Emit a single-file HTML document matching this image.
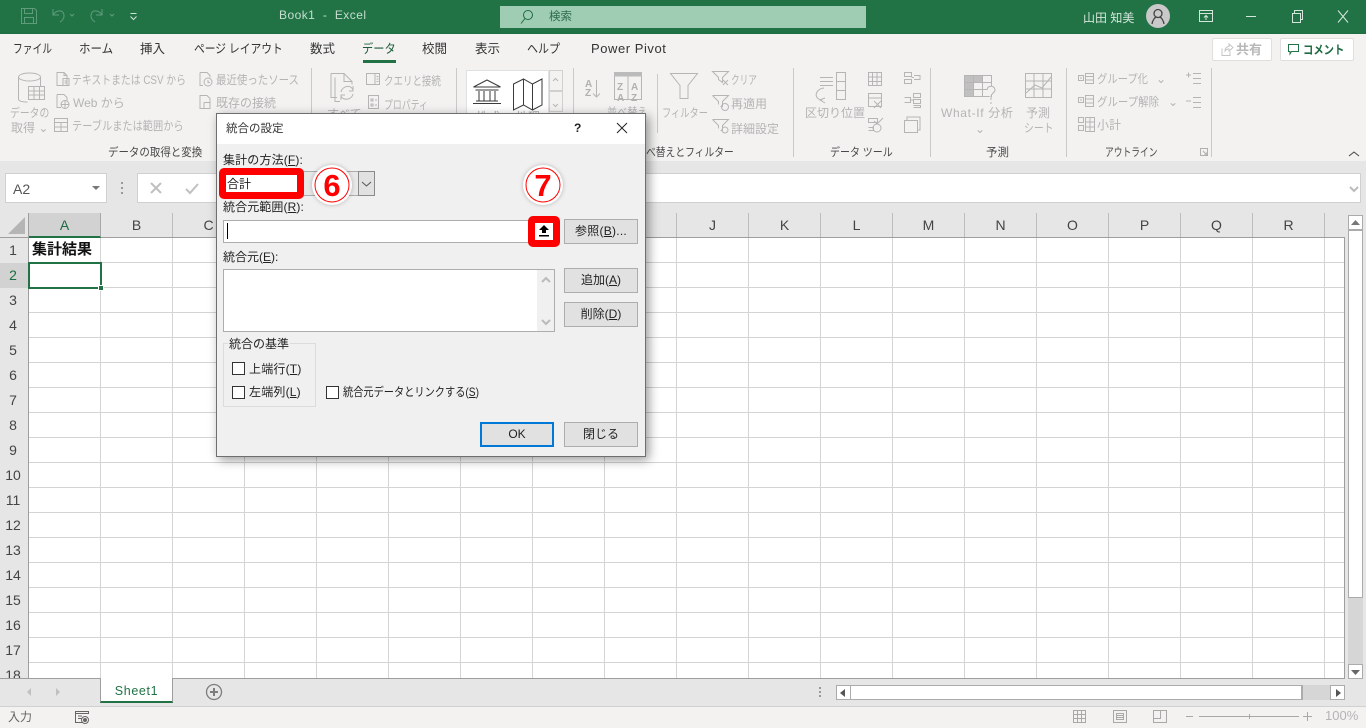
<!DOCTYPE html>
<html lang="ja"><head><meta charset="utf-8"><title>Book1 - Excel</title>
<style>
*{box-sizing:border-box}
html,body{margin:0;padding:0;width:1366px;height:728px;overflow:hidden;background:#e6e6e6}
body{position:relative;font-family:"Liberation Sans","Noto Sans CJK JP",sans-serif;font-size:12px;color:#444}
.a{position:absolute}
.t{position:absolute;white-space:nowrap;line-height:16px;transform-origin:0 0}
.g{color:#b4b4b4}
.l{color:#4a4a4a}
.d{color:#333;font-size:12.500px}
u{text-decoration:underline;text-underline-offset:1px}
svg{position:absolute;overflow:visible}
svg.i{fill:none;stroke:#b5b5b5;stroke-width:1}
.btn{position:absolute;left:564px;width:74px;height:25px;background:#e1e1e1;border:1px solid #adadad;text-align:center;line-height:23px;color:#222}
.cb{position:absolute;width:13px;height:13px;background:#fff;border:1px solid #333}
.sep{position:absolute;top:68px;width:1px;height:89px;background:#c9c9c9}
.col{position:absolute;top:213px;width:72px;height:24px;text-align:center;line-height:24px;font-size:14px;color:#444;border-right:1px solid #bdbdbd}
.row{position:absolute;left:0;width:28px;height:25px;text-align:center;line-height:25px;font-size:14px;color:#444;padding-right:2px}
</style></head><body>

<!-- title bar -->
<div class="a" style="left:0;top:0;width:1366px;height:34px;background:#217346"></div>
<svg class="i" style="left:0;top:0;stroke:#5f9c7c" width="180" height="34">
<path d="M21.500 8.500h13l2 2v13h-15zM24.500 8.500v5h8v-5M24.500 23.500v-6h9v6"/>
<path d="M53 9v6h6M53 15c3-5 10-6 11 0 .5 3-2 6-4 7"/>
<path d="M70 14l2 2 2-2M110 14l2 2 2-2" />
<path d="M102 9v6h-6M102 15c-3-5-10-6-11 0-.5 3 2 6 4 7"/>
<path d="M130.500 13.500h6M130.500 16.500l3 3 3-3" stroke="#cfe3d8"/>
</svg>
<div class="t" style="left:279px;top:7px;color:#c6ddd0;font-size:12px;letter-spacing:.45px">Book1&nbsp; -&nbsp; Excel</div>
<div class="a" style="left:500px;top:6px;width:366px;height:22px;background:#9fcdb3"></div>
<svg class="i" style="left:518px;top:8px;stroke:#1e6b42" width="20" height="18"><circle cx="10" cy="7" r="4.500"/><path d="M7 10.500l-4 5"/></svg>
<div class="t" style="left:549px;top:9px;color:#2d6b4a;font-size:11.500px">検索</div>
<div class="t" style="left:1083px;top:10px;color:#d5e6dc;font-size:12px">山田 知美</div>
<div class="a" style="left:1146px;top:4px;width:24px;height:24px;border-radius:50%;background:#c9c9c9"></div>
<svg class="i" style="left:1146px;top:4px;stroke:#444;stroke-width:1.300" width="24" height="24"><circle cx="12" cy="9.500" r="4"/><path d="M6 20c.5-4 3-6.500 4-7M18 20c-.5-4-3-6.500-4-7"/></svg>
<svg class="i" style="left:1190px;top:0;stroke:#d5e6dc" width="170" height="34">
<path d="M9.500 10.500h13v11h-13zM9.500 13.500h13M16 20v-4M14 17.500l2-2 2 2"/>
<path d="M56 16.500h10"/>
<path d="M102.500 13.500h8v9h-8zM104.500 13.500v-3h8v9h-2"/>
<path d="M148 10.500l10 12M158 10.500l-10 12"/>
</svg>

<!-- ribbon -->
<div class="a" style="left:0;top:34px;width:1366px;height:127px;background:#f3f2f1;box-shadow:0 1px 3px rgba(0,0,0,.22)"></div>
<div class="t d" style="left:13px;top:41px;transform:scaleX(.78)">ファイル</div>
<div class="t d" style="left:79px;top:41px;transform:scaleX(.92)">ホーム</div>
<div class="t d" style="left:140px;top:41px">挿入</div>
<div class="t d" style="left:194px;top:41px;transform:scaleX(.86)">ページ レイアウト</div>
<div class="t d" style="left:310px;top:41px">数式</div>
<div class="t d" style="left:362px;top:41px;color:#1d5c3a;transform:scaleX(.9)">データ</div>
<div class="a" style="left:363px;top:60px;width:33px;height:3px;background:#217346"></div>
<div class="t d" style="left:422px;top:41px">校閲</div>
<div class="t d" style="left:475px;top:41px">表示</div>
<div class="t d" style="left:527px;top:41px;transform:scaleX(.88)">ヘルプ</div>
<div class="t d" style="left:591px;top:41px;font-size:13px;letter-spacing:.55px">Power Pivot</div>

<div class="a" style="left:1212px;top:38px;width:60px;height:23px;background:#fff;border:1px solid #e1dfdd;border-radius:2px"></div>
<svg class="i" style="left:1220px;top:43px;stroke:#c4c4c4" width="14" height="14"><path d="M2 5.500v7h8v-4M5 8c0-3 2-4.500 4-4.500V1l4 3.500-4 3.500V6c-2 0-3 .5-4 2z"/></svg>
<div class="t g" style="left:1236px;top:42px;font-size:13px;font-weight:bold;color:#b8b8b8">共有</div>
<div class="a" style="left:1280px;top:38px;width:74px;height:23px;background:#fff;border:1px solid #e1dfdd;border-radius:2px"></div>
<svg class="i" style="left:1288px;top:44px;stroke:#217346" width="12" height="12"><path d="M.5.500h10v7h-7l-1.500 2.500v-2.500h-1.500z"/></svg>
<div class="t" style="left:1303px;top:42px;font-size:12px;font-weight:bold;color:#1f6b43;transform:scaleX(.86)">コメント</div>

<div class="sep" style="left:311px"></div><div class="sep" style="left:456px"></div><div class="sep" style="left:573px"></div>
<div class="sep" style="left:657px;top:74px;height:59px"></div>
<div class="sep" style="left:793px"></div><div class="sep" style="left:930px"></div><div class="sep" style="left:1066px"></div><div class="sep" style="left:1211px"></div>

<!-- get data -->
<svg class="i" style="left:0;top:66px" width="310" height="80">
<ellipse cx="29.500" cy="11" rx="11" ry="4"/><path d="M18.500 11v22c0 1.500 2 3 9 3M40.500 11v9"/>
<path d="M28.500 20.500h16v13h-16zM28.500 25h16M28.500 29h16M34 20.500v13M39.500 20.500v13" />
<path d="M57 6.500h7l3 3v10h-10zM64 6.500v3h3M63 12.500h6v7h-6zM64.500 15h3M64.500 17h3"/>
<path d="M57 28.500h7l3 3v4M57 28.500v13h4"/><circle cx="65" cy="38.500" r="4"/><path d="M61 38.500h8M65 34.500v8"/>
<path d="M54.500 52.500h13v13h-13zM54.500 56.500h13M54.500 61h13M61 56.500v9"/>
<path d="M200 6.500h7l3 3v2M200 6.500v13h3"/><circle cx="208" cy="16" r="4"/><path d="M208 14v2.500h2"/>
<path d="M200 29.500h7l3 3v10h-10zM204 36.500h6M204 36.500v6"/>
</svg>
<div class="t g" style="left:72px;top:72px;transform:scaleX(.82)">テキストまたは CSV から</div>
<div class="t g" style="left:73px;top:95px">Web から</div>
<div class="t g" style="left:72px;top:118px;transform:scaleX(.85)">テーブルまたは範囲から</div>
<div class="t g" style="left:216px;top:72px;transform:scaleX(.87)">最近使ったソース</div>
<div class="t g" style="left:216px;top:95px">既存の接続</div>
<div class="t g" style="left:10px;top:105px;transform:scaleX(.82)">データの</div>
<div class="t g" style="left:11px;top:120px">取得 ⌄</div>
<div class="t l" style="left:108px;top:145px;font-size:11.500px;transform:scaleX(.91)">データの取得と変換</div>

<!-- queries -->
<svg class="i" style="left:310px;top:66px" width="490" height="80">
<path d="M21 7.500h13l8 8v3M21 7.500v24h6M25 11.500v24h5M34 7.500v8h8"/>
<path d="M31 26c1-6 10-8 12-2M43 28c-1 6-10 7-12 2M43 20v5h-4M31 34v-5h4"/>
<path d="M56.500 7.500h13v11h-13zM65 7.500v11M66.500 10.500h2M66.500 13h2M66.500 15.500h2"/>
<path d="M58.500 29.500h10v13h-10zM61 33h2v2h-2zM61 38h2v2h-2zM65 34h2M65 39h2"/>
</svg>
<div class="t g" style="left:384px;top:73px;transform:scaleX(.79)">クエリと接続</div>
<div class="t g" style="left:384px;top:97px;transform:scaleX(.74)">プロパティ</div>
<div class="t g" style="left:327px;top:106px">すべて</div>

<!-- data types -->
<div class="a" style="left:466px;top:70px;width:83px;height:45px;background:#fff;border:1px solid #e1e1e1"></div>
<div class="a" style="left:549px;top:70px;width:14px;height:21px;background:#f3f2f1;border:1px solid #d0d0d0"></div>
<div class="a" style="left:549px;top:91px;width:14px;height:21px;background:#f3f2f1;border:1px solid #d0d0d0"></div>
<svg class="i" style="left:466px;top:66px;stroke:#3a3a3a" width="100" height="50">
<path d="M7.500 21l13.500-7 13.500 7zM9.500 24h23M10 35h22M7 37.500h28M13 25v10M18 25v10M24 25v10M29 25v10"/>
<path d="M47.500 18l10-5 9 5 9.500-5v26l-9.500 5-9-5-10 5zM57.500 13v26M66.500 18v26"/>
<path d="M87 15l2.500-2.500 2.500 2.500M87 38l2.500 2.500 2.500-2.500" stroke="#b5b5b5"/>
</svg>
<div class="t g" style="left:476px;top:109px;font-size:12px;color:#aaa">株式</div>
<div class="t g" style="left:516px;top:109px;font-size:12px;color:#aaa">地理</div>

<!-- sort filter -->
<svg class="i" style="left:580px;top:66px" width="220" height="80">
<path d="M16.500 14v17M13 27.500l3.500 3.500 3.500-3.500"/>
<path d="M34.500 6.500h27v27h-27zM48 10v23"/><rect x="34" y="6" width="28" height="4.500" fill="#bbb" stroke="none"/>
<path d="M90.500 7.500h27l-9.500 12v13h-8v-13z"/>
<path d="M132.500 5.500h16l-6 6v5l-4-3v-2zM143 14l5 5M148 14l-5 5"/>
<path d="M132.500 29.500h16l-6 6v5h-2M132.500 29.500l6 6v3"/><circle cx="145" cy="41" r="3.500"/>
<path d="M132.500 53.500h16l-6 6v5h-2M132.500 53.500l6 6v3"/><circle cx="145" cy="64" r="3"/>
</svg>
<svg style="left:584px;top:78px" width="60" height="24"><g font-family="Liberation Sans,sans-serif" font-size="10" fill="#b0b0b0" style="font-weight:bold"><text x="1" y="9">A</text><text x="1" y="18">Z</text><text x="33" y="12">Z</text><text x="47" y="12">A</text><text x="33" y="23">A</text><text x="47" y="23">Z</text></g></svg>
<div class="t g" style="left:607px;top:105px;font-size:11.500px;transform:scaleX(.88)">並べ替え</div>
<div class="t g" style="left:662px;top:105px;transform:scaleX(.77)">フィルター</div>
<div class="t g" style="left:731px;top:72px;transform:scaleX(.72)">クリア</div>
<div class="t g" style="left:731px;top:96px">再適用</div>
<div class="t g" style="left:731px;top:121px">詳細設定</div>
<div class="t l" style="left:646px;top:145px;font-size:11.500px;transform:scaleX(.85)">べ替えとフィルター</div>

<!-- data tools -->
<svg class="i" style="left:800px;top:66px" width="130" height="80">
<path d="M20 11.500h13M20 15.500h13M20 19.500h13M36.500 6.500h9v27h-9zM36.500 15.500h9M36.500 24.500h9M24 22c-9 1-11 11-2 12M25 37l-5-3 5-2"/>
<path d="M68.500 6.500h13v13h-13zM72.500 6.500v13M77 6.500v13M68.500 11h13M68.500 15.500h13"/>
<path d="M68.500 27.500h13v13h-13zM68.500 32h13"/><path d="M74 35l7 7M81 35l-7 7"/>
<path d="M68.500 52.500h9v4h-9zM68.500 61.500h5v3h-5M74 55l3 3 6-6"/><circle cx="77" cy="62" r="4"/>
<path d="M104.500 6.500h7v4h-7zM104.500 13.500h7v4h-7zM114 9.500h6v4h-6M111.500 11.500h2.500"/>
<path d="M113.500 27.500h7v4h-7zM113.500 33.500h7v4h-7zM113.500 39.500h7v2h-7M104.500 31.500h6v5h-6M110.500 34h3"/>
<path d="M104.500 54.500h13v12h-13zM107 54v-3h13v13h-2"/>
</svg>
<div class="t g" style="left:805px;top:105px">区切り位置</div>
<div class="t l" style="left:830px;top:145px;font-size:11.500px;transform:scaleX(.87)">データ ツール</div>

<!-- forecast -->
<svg class="i" style="left:960px;top:66px" width="110" height="80">
<rect x="4" y="9" width="18" height="7" fill="#c0c0c0" stroke="none"/><rect x="4" y="16" width="9" height="15" fill="#c0c0c0" stroke="none"/>
<path d="M4.500 9.500h27v21h-27zM4.500 16.500h27M4.500 23.500h27M13.500 9.500v21M22.500 9.500v21"/>
<path fill="#f3f2f1" d="M27 24c0-5 8-5 8 0 0 3-4 3-4 7v3M31 36v2"/>
<path d="M65.500 7.500h26v24h-26zM65.500 15h26M65.500 23h26M74 7.500v24M83 7.500v24M66 27l9-8 7 3 9-11M65.500 31.500"/>
</svg>
<div class="t g" style="left:941px;top:105px;letter-spacing:.65px">What-If 分析</div>
<div class="t g" style="left:975px;top:121px">⌄</div>
<div class="t g" style="left:1026px;top:105px">予測</div>
<div class="t g" style="left:1024px;top:120px;transform:scaleX(.82)">シート</div>
<div class="t l" style="left:986px;top:145px;font-size:11.500px">予測</div>

<!-- outline -->
<svg class="i" style="left:1070px;top:66px" width="135" height="80">
<path d="M8.500 9.500h5v5h-5zM10 12h2M15.500 7.500h8v10h-8zM15.500 10.500h8M15.500 14h8"/>
<path d="M8.500 31.500h5v5h-5zM10 34h2M15.500 29.500h8v11h-8zM15.500 33h8M15.500 37h8"/>
<path d="M8.500 51.500h5v5h-5zM8.500 59.500h5v5h-5zM15.500 51.500h9v14h-9zM15.500 56h9M15.500 61h9M20 51.500v14"/>
<path d="M116 9h5M118.500 6.500v5M123 7.500h8M123 12.500h8M123 17.500h8"/>
<path d="M116 35h5M123 31.500h8M123 36.500h8M123 41.500h8"/>
</svg>
<div class="t g" style="left:1097px;top:71px;transform:scaleX(.86)">グループ化</div>
<div class="t g" style="left:1156px;top:71px">⌄</div>
<div class="t g" style="left:1097px;top:94px;transform:scaleX(.87)">グループ解除</div>
<div class="t g" style="left:1168px;top:94px">⌄</div>
<div class="t g" style="left:1097px;top:117px">小計</div>
<div class="t l" style="left:1105px;top:145px;font-size:11.500px;transform:scaleX(.76)">アウトライン</div>
<svg class="i" style="left:1200px;top:148px;stroke:#b0b0b0" width="10" height="10"><path d="M.5.500h7v7h-7zM3 3l4 4M4 7h3V4"/></svg>
<svg class="i" style="left:1348px;top:150px;stroke:#444" width="12" height="8"><path d="M1 6l5-4 5 4"/></svg>

<!-- formula bar -->
<div class="a" style="left:0;top:161px;width:1366px;height:52px;background:#e6e6e6"></div>
<div class="a" style="left:5px;top:173px;width:102px;height:30px;background:#fff;border:1px solid #d0d0d0"></div>
<div class="t" style="left:13px;top:181px;font-size:14px;color:#555">A2</div>
<svg style="left:92px;top:186px" width="8" height="5"><path d="M0 0h8l-4 4z" fill="#777"/></svg>
<div class="a" style="left:121px;top:182px;width:2px;height:2px;background:#999"></div>
<div class="a" style="left:121px;top:187px;width:2px;height:2px;background:#999"></div>
<div class="a" style="left:121px;top:192px;width:2px;height:2px;background:#999"></div>
<div class="a" style="left:137px;top:173px;width:1224px;height:30px;background:#fff;border:1px solid #d0d0d0"></div>
<svg class="i" style="left:150px;top:181px;stroke:#c0c0c0;stroke-width:2" width="50" height="16"><path d="M1 2l10 10M11 2L1 12M36 8l4 4 8-9"/></svg>
<svg class="i" style="left:1349px;top:186px;stroke:#bbb;stroke-width:2" width="10" height="6"><path d="M1 1l4 4 4-4"/></svg>

<!-- grid -->
<div class="a" style="left:29px;top:238px;width:1316px;height:441px;background-color:#fff;background-image:linear-gradient(to right,transparent 71px,#d4d4d4 71px),linear-gradient(to bottom,transparent 24px,#d4d4d4 24px);background-size:72px 25px;background-position:0 0"></div>
<div class="a" style="left:0;top:213px;width:1345px;height:25px;background:#e6e6e6;border-bottom:1px solid #9e9e9e"></div>
<div class="a" style="left:28px;top:213px;width:1px;height:466px;background:#9e9e9e"></div>
<div class="a" style="left:0;top:238px;width:28px;height:441px;background:#e6e6e6"></div>
<div class="a" style="left:1344px;top:238px;width:1px;height:441px;background:#9e9e9e"></div>
<svg style="left:8px;top:217px" width="17" height="17"><path d="M17 0v17H0z" fill="#b5b5b5"/></svg>
<div class="a" style="left:29px;top:213px;width:72px;height:25px;background:#d2d2d2;border-bottom:2px solid #217346;border-right:1px solid #a8a8a8;text-align:center;line-height:24px;font-size:14px;color:#1d6b45">A</div>
<div class="col" style="left:101px">B</div><div class="col" style="left:173px">C</div><div class="col" style="left:245px">D</div><div class="col" style="left:317px">E</div><div class="col" style="left:389px">F</div><div class="col" style="left:461px">G</div><div class="col" style="left:533px">H</div><div class="col" style="left:605px">I</div><div class="col" style="left:677px">J</div><div class="col" style="left:749px">K</div><div class="col" style="left:821px">L</div><div class="col" style="left:893px">M</div><div class="col" style="left:965px">N</div><div class="col" style="left:1037px">O</div><div class="col" style="left:1109px">P</div><div class="col" style="left:1181px">Q</div><div class="col" style="left:1253px">R</div>
<div class="row" style="top:238px">1</div>
<div class="row" style="top:263px;background:#d2d2d2;color:#1d6b45">2</div>
<div class="row" style="top:288px">3</div><div class="row" style="top:313px">4</div><div class="row" style="top:338px">5</div><div class="row" style="top:363px">6</div><div class="row" style="top:388px">7</div><div class="row" style="top:413px">8</div><div class="row" style="top:438px">9</div><div class="row" style="top:463px">10</div><div class="row" style="top:488px">11</div><div class="row" style="top:513px">12</div><div class="row" style="top:538px">13</div><div class="row" style="top:563px">14</div><div class="row" style="top:588px">15</div><div class="row" style="top:613px">16</div><div class="row" style="top:638px">17</div>
<div class="row" style="top:663px;height:15px;overflow:hidden">18</div>
<div class="t" style="left:32px;top:241px;font-size:15px;font-weight:bold;color:#111;line-height:18px">集計結果</div>
<div class="a" style="left:28px;top:262px;width:74px;height:27px;border:2px solid #217346"></div>
<div class="a" style="left:98px;top:285px;width:6px;height:6px;background:#217346;border:1px solid #fff"></div>

<!-- v scrollbar -->
<div class="a" style="left:1345px;top:213px;width:21px;height:465px;background:#e6e6e6"></div>
<div class="a" style="left:1348px;top:215px;width:15px;height:15px;background:#fff;border:1px solid #ababab"></div>
<svg style="left:1351px;top:220px" width="9" height="5"><path d="M4.500 0L9 5H0z" fill="#777"/></svg>
<div class="a" style="left:1348px;top:230px;width:15px;height:368px;background:#fff;border:1px solid #ababab;border-bottom-width:1px"></div>
<div class="a" style="left:1348px;top:598px;width:15px;height:66px;background:#d6d6d6"></div>
<div class="a" style="left:1348px;top:664px;width:15px;height:15px;background:#fff;border:1px solid #ababab"></div>
<svg style="left:1351px;top:670px" width="9" height="5"><path d="M0 0h9L4.500 5z" fill="#666"/></svg>

<!-- sheet bar -->
<div class="a" style="left:0;top:678px;width:1345px;height:1px;background:#9e9e9e"></div>
<div class="a" style="left:0;top:679px;width:1366px;height:27px;background:#e6e6e6"></div>
<svg style="left:26px;top:688px" width="36" height="8"><path d="M5 0v8L1 4zM30 0v8l4-4z" fill="#c0c0c0"/></svg>
<div class="a" style="left:100px;top:678px;width:73px;height:25px;background:#fff;border-left:1px solid #9e9e9e;border-right:1px solid #9e9e9e;border-bottom:2px solid #217346;text-align:center;font-size:12.500px;line-height:27px;color:#217346;letter-spacing:.65px">Sheet1</div>
<svg class="i" style="left:205px;top:683px;stroke:#7d7d7d;stroke-width:1.300" width="18" height="18"><circle cx="9" cy="9" r="7.500"/><path d="M5 9h8M9 5v8" stroke-width="2"/></svg>
<div class="a" style="left:819px;top:687px;width:2px;height:2px;background:#999"></div><div class="a" style="left:819px;top:691px;width:2px;height:2px;background:#999"></div><div class="a" style="left:819px;top:695px;width:2px;height:2px;background:#999"></div>
<div class="a" style="left:836px;top:685px;width:15px;height:15px;background:#fff;border:1px solid #ababab"></div>
<svg style="left:840px;top:689px" width="6" height="8"><path d="M5 0v8L0 4z" fill="#555"/></svg>
<div class="a" style="left:851px;top:685px;width:452px;height:15px;background:#fff;border:1px solid #ababab;border-left:none;border-right-width:2px"></div>
<div class="a" style="left:1303px;top:685px;width:27px;height:15px;background:#d6d6d6"></div>
<div class="a" style="left:1330px;top:685px;width:15px;height:15px;background:#fff;border:1px solid #ababab"></div>
<svg style="left:1336px;top:689px" width="6" height="8"><path d="M0 0v8l5-4z" fill="#555"/></svg>

<!-- status bar -->
<div class="a" style="left:0;top:706px;width:1366px;height:22px;background:#f3f2f1;border-top:1px solid #d0d0d0"></div>
<div class="t" style="left:8px;top:709px;font-size:12px;color:#666">入力</div>
<svg class="i" style="left:75px;top:711px;stroke:#666" width="15" height="14"><path d="M.5.500h13v2h-13zM.500 2.500v9h7M3 5h4M3 7.500h4"/><circle cx="10" cy="9" r="3.500"/><circle cx="10" cy="9" r="1.500" fill="#666"/></svg>
<svg class="i" style="left:1070px;top:708px;stroke:#a8a8a8" width="250" height="18">
<path d="M3.500 2.500h12v12h-12zM3.500 6.500h12M3.500 10.500h12M7.500 2.500v12M11.500 2.500v12"/>
<path d="M43.500 2.500h13v12h-13zM46.500 5.500h7v6h-7zM47 7.500h6M47 9.500h6"/>
<path d="M83.500 2.500h13v12h-13zM83.500 10.500h7v-8"/>
<path d="M116 8.500h7M129 8.500h100M179.500 6v5" />
<path d="M233 8.500h9M237.500 4v9"/>
</svg>
<div class="t" style="left:1325px;top:708px;font-size:13px;color:#b4b4b4">100%</div>

<!-- dialog -->
<div class="a" style="left:216px;top:113px;width:430px;height:344px;background:#f0f0f0;border:1px solid #6f6f6f;box-shadow:3px 3px 10px rgba(0,0,0,.4)"></div>
<div class="a" style="left:217px;top:114px;width:428px;height:30px;background:#fff"></div>
<div class="t" style="left:226px;top:121px;font-size:11.500px;color:#333">統合の設定</div>
<div class="t" style="left:574px;top:120px;font-size:12px;color:#222;font-weight:bold">?</div>
<svg class="i" style="left:616px;top:122px;stroke:#222" width="13" height="13"><path d="M1 1l10 10M11 1L1 11"/></svg>
<div class="t" style="left:223px;top:152px;font-size:12px;color:#222;letter-spacing:.15px">集計の方法(<u>F</u>):</div>

<div class="a" style="left:300px;top:171px;width:75px;height:25px;background:#e8e8e8;border:1px solid #adadad"></div>
<div class="a" style="left:358px;top:171px;width:17px;height:25px;background:#e1e1e1;border:1px solid #8a8a8a"></div>
<svg class="i" style="left:361px;top:181px;stroke:#555" width="11" height="6"><path d="M1 1l4.500 4L10 1"/></svg>
<div class="a" style="left:219px;top:168px;width:85px;height:31px;background:#fff;border:7px solid #f00;border-radius:5px"></div>
<div class="t" style="left:227px;top:176px;font-size:12px;color:#222">合計</div>

<svg style="left:310px;top:163px" width="256" height="44">
<circle cx="22" cy="22" r="20" fill="#fff" style="filter:drop-shadow(0 0 2px rgba(0,0,0,.25))"/><circle cx="22" cy="22" r="17" fill="#fff" stroke="#f00" stroke-width="1"/>
<circle cx="233" cy="22" r="20" fill="#fff" style="filter:drop-shadow(0 0 2px rgba(0,0,0,.25))"/><circle cx="233" cy="22" r="17" fill="#fff" stroke="#f00" stroke-width="1"/>
<text x="22" y="33" text-anchor="middle" font-family="Liberation Sans,sans-serif" font-weight="bold" font-size="31" fill="#f00">6</text>
<text x="233" y="33" text-anchor="middle" font-family="Liberation Sans,sans-serif" font-weight="bold" font-size="31" fill="#f00">7</text>
</svg>

<div class="t" style="left:223px;top:199px;font-size:12px;color:#222;letter-spacing:.1px">統合元範囲(<u>R</u>):</div>
<div class="a" style="left:223px;top:220px;width:310px;height:23px;background:#fff;border:1px solid #adadad"></div>
<div class="a" style="left:227px;top:223px;width:1px;height:16px;background:#000"></div>
<div class="a" style="left:528px;top:216px;width:32px;height:31px;background:#fff;border:7px solid #f00;border-radius:5px"></div>
<svg style="left:538px;top:225px" width="12" height="12"><path d="M6 0l5 5H8v3H4V5H1z" fill="#000"/><rect x="1" y="10" width="10" height="1.500" fill="#000"/></svg>
<div class="btn" style="top:219px;letter-spacing:.25px">参照(<u>B</u>)...</div>

<div class="t" style="left:223px;top:249px;font-size:12px;color:#222">統合元(<u>E</u>):</div>
<div class="a" style="left:223px;top:269px;width:332px;height:63px;background:#fff;border:1px solid #adadad"></div>
<div class="a" style="left:537px;top:270px;width:17px;height:61px;background:#f0f0f0"></div>
<svg class="i" style="left:541px;top:276px;stroke:#bbb;stroke-width:2" width="10" height="50"><path d="M1 6l4-4 4 4M1 44l4 4 4-4"/></svg>
<div class="btn" style="top:268px">追加(<u>A</u>)</div>
<div class="btn" style="top:302px">削除(<u>D</u>)</div>

<div class="a" style="left:223px;top:343px;width:93px;height:64px;border:1px solid #dcdcdc"></div>
<div class="t" style="left:228px;top:336px;font-size:12px;color:#222;background:#f0f0f0;padding:0 1px">統合の基準</div>
<div class="cb" style="left:232px;top:362px"></div>
<div class="t" style="left:249px;top:361px;font-size:12px;color:#222;letter-spacing:.2px">上端行(<u>T</u>)</div>
<div class="cb" style="left:232px;top:386px"></div>
<div class="t" style="left:249px;top:384px;font-size:12px;color:#222;letter-spacing:.2px">左端列(<u>L</u>)</div>
<div class="cb" style="left:326px;top:386px"></div>
<div class="t" style="left:343px;top:384px;font-size:12px;color:#222;transform:scaleX(.85)">統合元データとリンクする(<u>S</u>)</div>

<div class="btn" style="left:480px;top:422px;border:2px solid #0078d7;line-height:21px">OK</div>
<div class="btn" style="top:422px">閉じる</div>

</body></html>
